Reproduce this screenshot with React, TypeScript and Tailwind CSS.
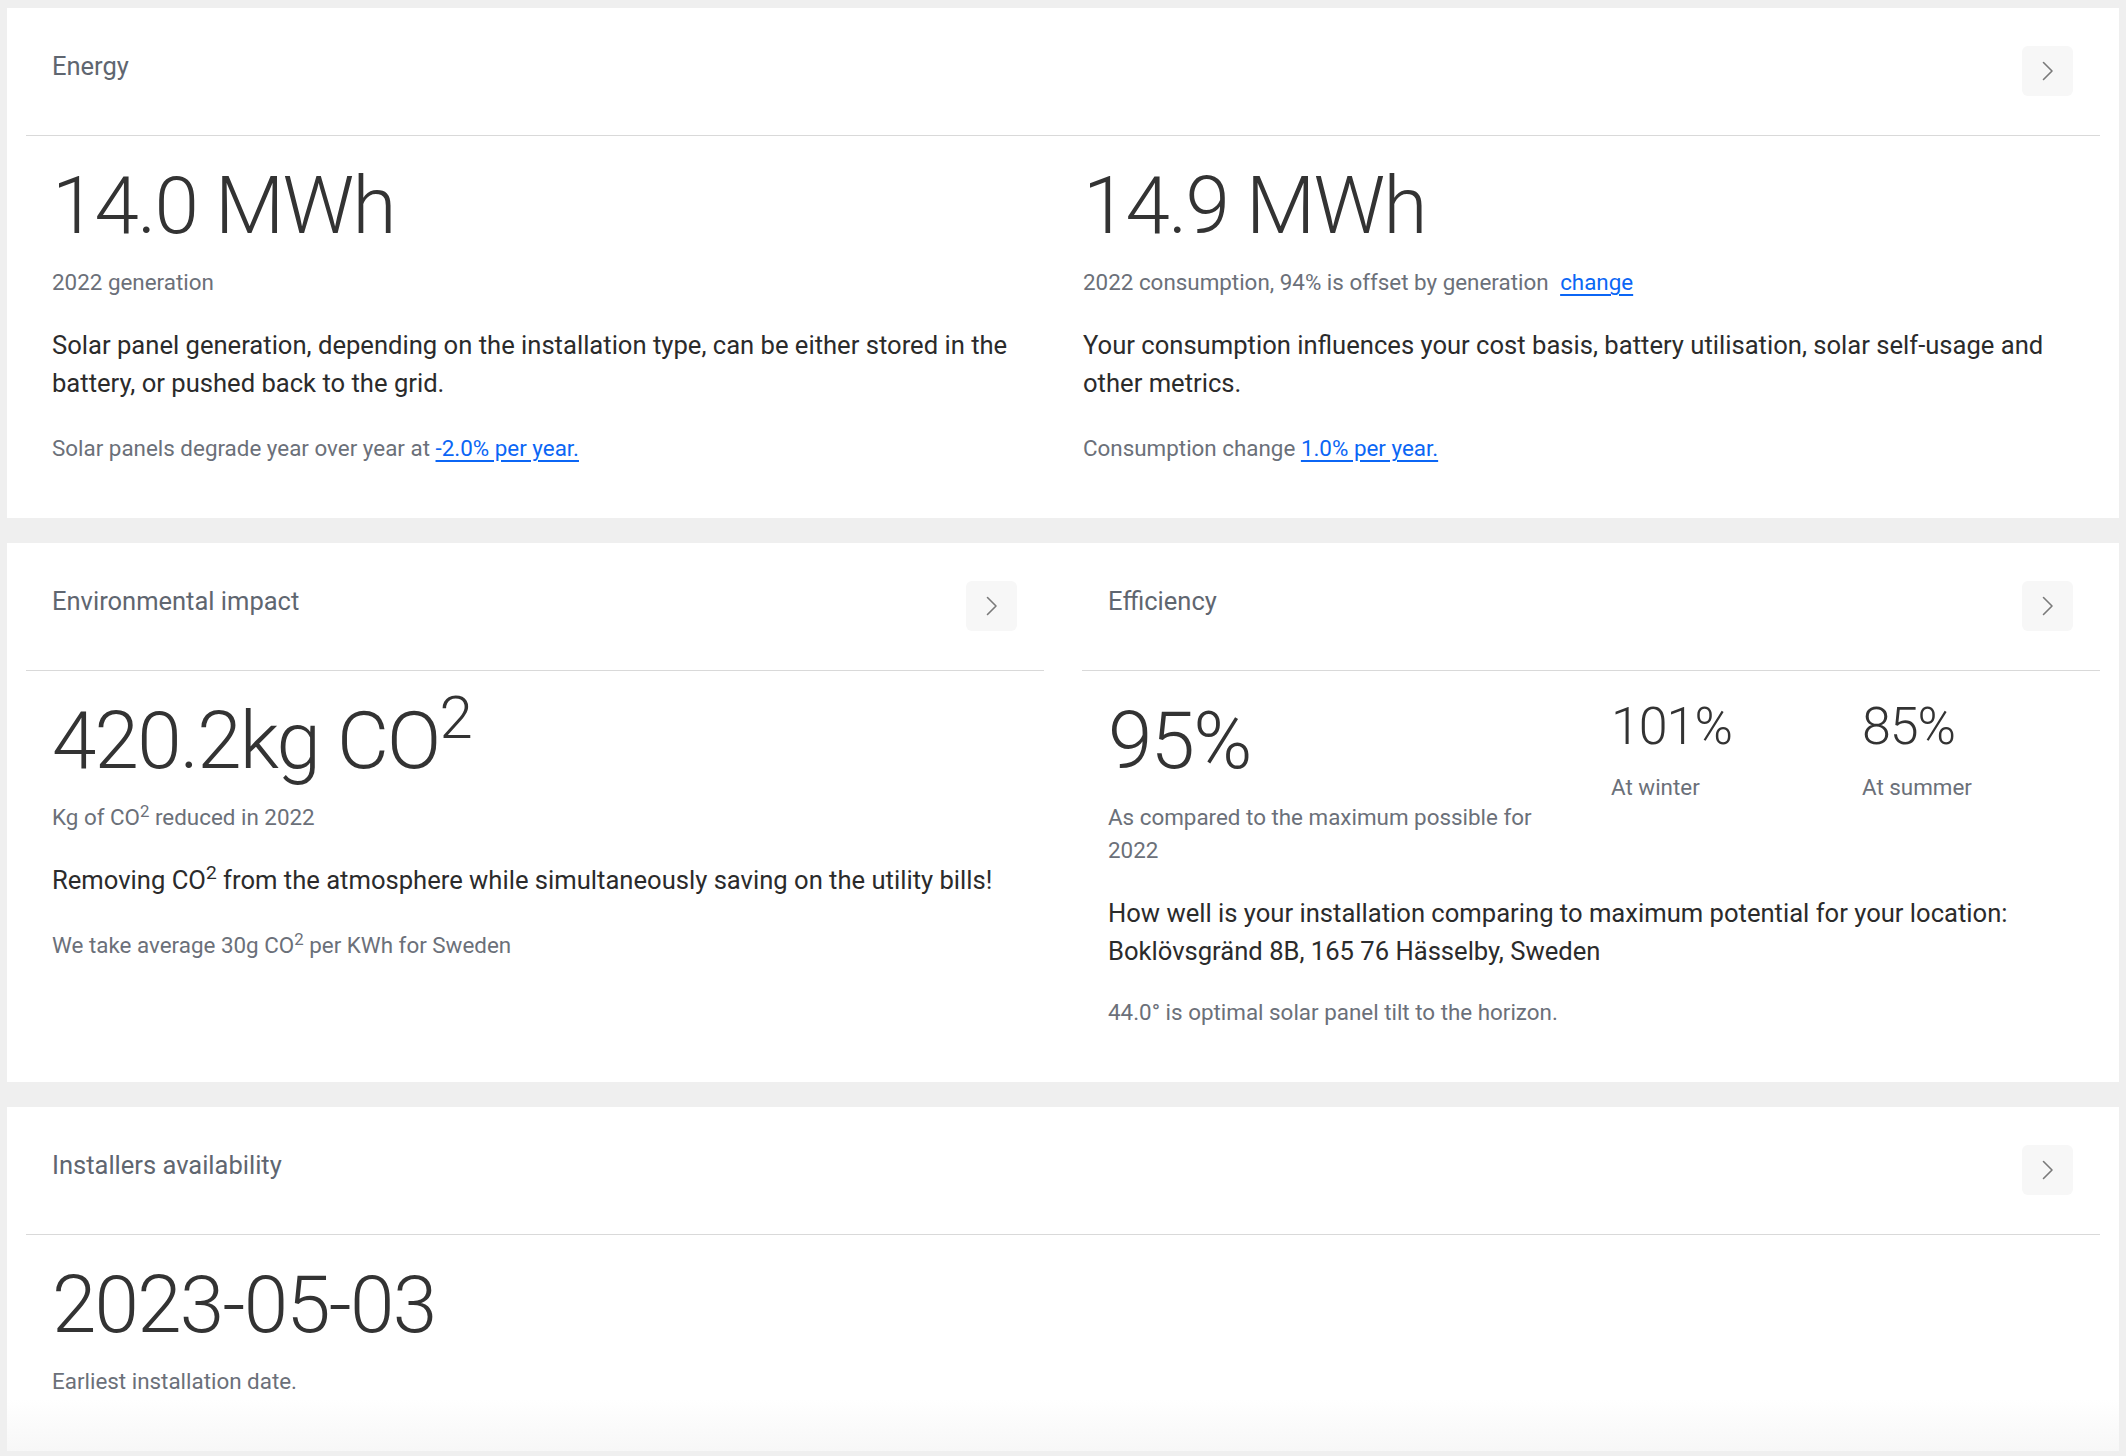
import React from 'react'

function Chevron() {
  return (
    <svg width="12" height="20" viewBox="0 0 12 20" fill="none">
      <path d="M1.5 1.5 L10 10 L1.5 18.5" stroke="#7a7a7a" strokeWidth="1.6" strokeLinecap="round" strokeLinejoin="round" />
    </svg>
  )
}

function SectionHeader({ title }: { title: string }) {
  return (
    <div className="flex items-start justify-between border-b border-[#d9d9d9] pl-[26px] pr-[27px] pt-[38px] pb-[39px]">
      <h3 className="mt-[5px] text-[25.5px] leading-[30px] font-normal text-[#5f6670]">{title}</h3>
      <button className="flex h-[50px] w-[51px] items-center justify-center rounded-[6px] bg-[#f7f7f7]">
        <Chevron />
      </button>
    </div>
  )
}

function BigValue({ children }: { children: React.ReactNode }) {
  return <div className="text-[80px] leading-[80px] font-light tracking-[-0.022em] text-[#333333]">{children}</div>
}

function Caption({ children, className = '' }: { children: React.ReactNode; className?: string }) {
  return <p className={`text-[22.4px] leading-[33px] text-[#6b7079] ${className}`}>{children}</p>
}

function Body({ children, className = '' }: { children: React.ReactNode; className?: string }) {
  return <p className={`text-[25.6px] leading-[38px] text-[#2b2b2b] ${className}`}>{children}</p>
}

function Link({ children, className = '' }: { children: React.ReactNode; className?: string }) {
  return (
    <a href="#" className={`text-[#0b66f5] underline underline-offset-[4px] ${className}`}>
      {children}
    </a>
  )
}

export default function App() {
  return (
    <div className="min-h-screen bg-[#efefef] px-[7px] pt-[8px] pb-[6px] font-['Roboto',sans-serif]">
      <div className="flex flex-col gap-[25px]">
        {/* Energy */}
        <section className="bg-white px-[19px]">
          <SectionHeader title="Energy" />
          <div className="grid grid-cols-2 gap-x-[40px] px-[26px] pt-[30px] pb-[53px]">
            <div>
              <BigValue>14.0 MWh</BigValue>
              <Caption className="mt-[20px]">2022 generation</Caption>
              <Body className="mt-[27px]">
                Solar panel generation, depending on the installation type, can be either stored in the
                battery, or pushed back to the grid.
              </Body>
              <Caption className="mt-[30px]">
                Solar panels degrade year over year at <Link>-2.0% per year.</Link>
              </Caption>
            </div>
            <div>
              <BigValue>14.9 MWh</BigValue>
              <Caption className="mt-[20px]">
                2022 consumption, 94% is offset by generation <Link className="ml-[6px]">change</Link>
              </Caption>
              <Body className="mt-[27px]">
                Your consumption influences your cost basis, battery utilisation, solar self-usage and
                other metrics.
              </Body>
              <Caption className="mt-[30px]">
                Consumption change <Link>1.0% per year.</Link>
              </Caption>
            </div>
          </div>
        </section>

        {/* Environmental impact + Efficiency */}
        <div className="grid grid-cols-2 bg-white">
          <section className="px-[19px]">
            <SectionHeader title="Environmental impact" />
            <div className="px-[26px] pt-[30px] pb-[53px]">
              <BigValue>
                420.2kg CO<sup>2</sup>
              </BigValue>
              <Caption className="mt-[20px]">
                Kg of CO<sup>2</sup> reduced in 2022
              </Caption>
              <Body className="mt-[27px]">
                Removing CO<sup>2</sup> from the atmosphere while simultaneously saving on the utility bills!
              </Body>
              <Caption className="mt-[30px]">
                We take average 30g CO<sup>2</sup> per KWh for Sweden
              </Caption>
            </div>
          </section>
          <section className="px-[19px]">
            <SectionHeader title="Efficiency" />
            <div className="px-[26px] pt-[30px] pb-[53px]">
              <div className="grid grid-cols-[503px_251px_1fr]">
                <div className="pr-[40px]">
                  <BigValue>95%</BigValue>
                  <Caption className="mt-[20px]">As compared to the maximum possible for 2022</Caption>
                </div>
                <div>
                  <div className="text-[52px] leading-[52px] font-light tracking-[-0.02em] text-[#333333]">101%</div>
                  <Caption className="mt-[18px]">At winter</Caption>
                </div>
                <div>
                  <div className="text-[52px] leading-[52px] font-light tracking-[-0.02em] text-[#333333]">85%</div>
                  <Caption className="mt-[18px]">At summer</Caption>
                </div>
              </div>
              <Body className="mt-[27px]">
                How well is your installation comparing to maximum potential for your location:
                Boklövsgränd 8B, 165 76 Hässelby, Sweden
              </Body>
              <Caption className="mt-[26px]">44.0° is optimal solar panel tilt to the horizon.</Caption>
            </div>
          </section>
        </div>

        {/* Installers availability */}
        <section className="bg-linear-to-b from-white from-85% to-[#f7f7f7] px-[19px]">
          <SectionHeader title="Installers availability" />
          <div className="px-[26px] pt-[30px] pb-[53px]">
            <BigValue>2023-05-03</BigValue>
            <Caption className="mt-[20px]">Earliest installation date.</Caption>
          </div>
        </section>
      </div>
    </div>
  )
}
